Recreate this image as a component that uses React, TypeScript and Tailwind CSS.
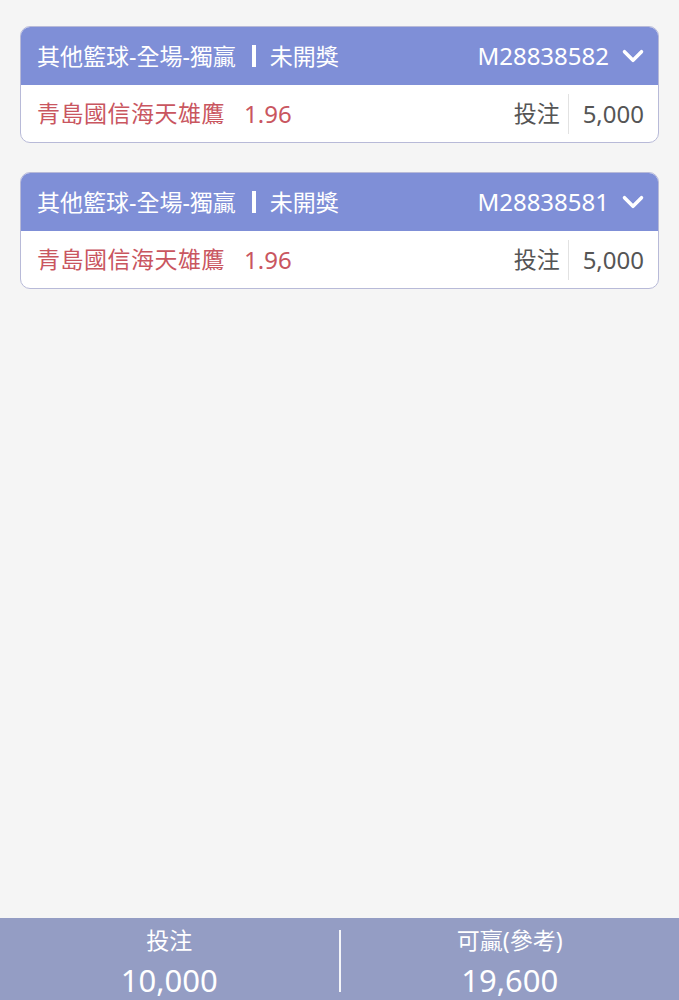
import { ChevronDown } from 'lucide-react';

const FONT = { fontFamily: '"Noto Sans", "Noto Sans CJK TC", sans-serif' };

type Bet = {
  id: string;
  market: string;
  status: string;
  pick: string;
  odds: string;
  stake: string;
};

const bets: Bet[] = [
  { id: 'M28838582', market: '其他籃球-全場-獨贏', status: '未開獎', pick: '青島國信海天雄鷹', odds: '1.96', stake: '5,000' },
  { id: 'M28838581', market: '其他籃球-全場-獨贏', status: '未開獎', pick: '青島國信海天雄鷹', odds: '1.96', stake: '5,000' },
];

function BetCard({ bet }: { bet: Bet }) {
  return (
    <div className="overflow-hidden rounded-[10px] border border-[#b8bad8] bg-white">
      <div className="flex h-[58px] items-center justify-between pl-4 pr-[8px] bg-[#7f8fd7] text-white">
        <div className="flex items-center text-[23px]">
          <span>{bet.market}</span>
          <span className="ml-[16px] mr-[14px] h-[22px] w-[4px] bg-white" />
          <span>{bet.status}</span>
        </div>
        <div className="flex items-center gap-[7px]">
          <span className="text-[24px]">{bet.id}</span>
          <ChevronDown size={34} strokeWidth={2.5} />
        </div>
      </div>
      <div className="flex h-[57px] items-center justify-between pl-4 pr-[14px]">
        <div className="flex items-center text-[#c9565f]">
          <span className="text-[23px] tracking-[0.5px]">{bet.pick}</span>
          <span className="ml-[19px] text-[24px]">{bet.odds}</span>
        </div>
        <div className="flex items-center text-[#555]">
          <span className="text-[23px]">投注</span>
          <span className="mx-[8px] h-[40px] w-px bg-[#e2e2e2]" />
          <span className="ml-[6px] text-[24px]">{bet.stake}</span>
        </div>
      </div>
    </div>
  );
}

export default function App() {
  return (
    <div className="flex h-[1000px] w-[679px] flex-col bg-[#f5f5f5]" style={FONT}>
      <div className="flex flex-1 flex-col gap-[29px] px-[20px] pt-[26px]">
        {bets.map((b) => (
          <BetCard key={b.id} bet={b} />
        ))}
      </div>
      <div className="flex h-[82px] items-stretch bg-[#949dc4] text-white">
        <div className="flex flex-1 flex-col items-center pt-[6px]">
          <span className="text-[23px] leading-[32px]">投注</span>
          <span className="mt-[3px] text-[31px] leading-[42px]">10,000</span>
        </div>
        <div className="mt-[12px] h-[62px] w-[2px] bg-white/90" />
        <div className="flex flex-1 flex-col items-center pt-[6px]">
          <span className="text-[23px] leading-[32px]">可贏(參考)</span>
          <span className="mt-[3px] text-[31px] leading-[42px]">19,600</span>
        </div>
      </div>
    </div>
  );
}
